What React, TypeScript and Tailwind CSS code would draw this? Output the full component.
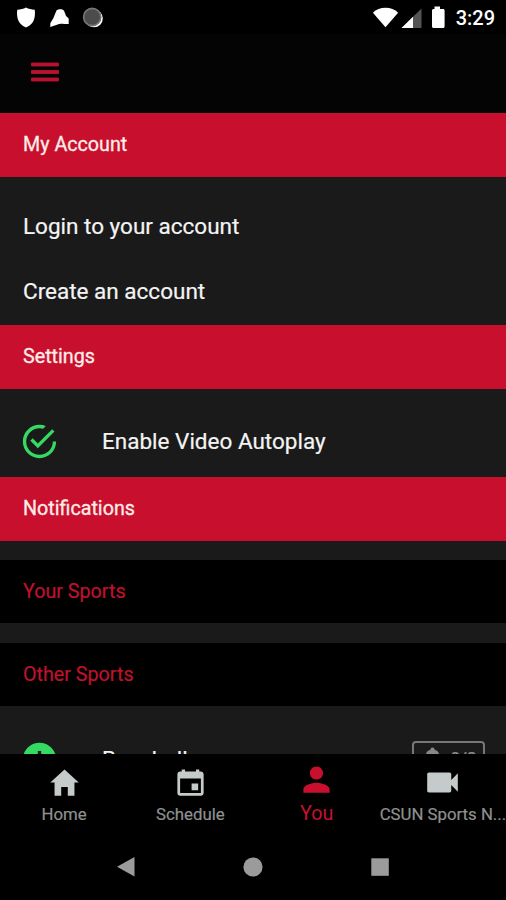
import type { ReactNode } from "react";
import type { IconType } from "react-icons";
import {
  IoMdAddCircle,
  IoMdCalendar,
  IoMdCheckmarkCircleOutline,
  IoMdHome,
  IoMdMenu,
  IoMdNotifications,
  IoMdPerson,
  IoMdVideocam,
} from "react-icons/io";

interface Tab {
  label: string;
  icon: IconType;
  active?: boolean;
}

const tabs: Tab[] = [
  { label: "Home", icon: IoMdHome },
  { label: "Schedule", icon: IoMdCalendar },
  { label: "You", icon: IoMdPerson, active: true },
  { label: "CSUN Sports N...", icon: IoMdVideocam },
];

function StatusBar() {
  return (
    <div className="flex h-[34px] shrink-0 items-center justify-between bg-black pl-4 pr-[11px]">
      <svg width="90" height="22" viewBox="0 0 90 22" fill="#fff">
        <path d="M10 1.600C7.500 3 4.500 3.700 1.300 3.800.8 7 .8 11.500 2.800 15.500 4.500 18.600 7.500 20.500 10 21.500c2.500-1 5.500-2.900 7.200-6 2-4 2-8.500 1.500-11.700C15.500 3.700 12.500 3 10 1.600z" />
        <path d="M40.500 4.500c1.400-1.600 6-1.800 7.300 0 1 1.500 1.500 3.700 2.200 5.500l2.700 2.500v5.600h-4.500c-3-.8-5.200-.3-7.200.6L34.200 21l.2-4 2.800-4.500z" />
        <circle cx="78" cy="12.500" r="8.800" />
        <circle cx="76.200" cy="11" r="8.600" fill="#4c4c4c" stroke="#777" strokeWidth="1.600" />
      </svg>
      <div className="flex items-center">
        <svg width="76" height="24" viewBox="0 0 76 24" fill="#fff" className="mr-[9px]">
          <path d="M14.500 22.300L1.900 7.700C5 4.500 9.500 2.700 14.500 2.700S24 4.500 27.100 7.700z" />
          <path d="M50.500 3.500V23H30.500z" fill="#555" />
          <path d="M42 11.800V23H30.500z" />
          <path d="M63.500 1.500h5.500V4h3c1 0 1.600.7 1.600 1.600v16c0 .9-.7 1.500-1.600 1.500H62.600c-.9 0-1.600-.6-1.600-1.500v-16C61 4.700 61.700 4 62.600 4h.9z" />
        </svg>
        <span className="relative top-px text-[20px] font-medium leading-6 text-white">3:29</span>
      </div>
    </div>
  );
}

function SectionHeader({ children }: { children: ReactNode }) {
  return (
    <h2 className="flex h-16 shrink-0 items-center bg-[#c8102e] pl-[23px] text-[19.7px] text-[#ffece8] [-webkit-text-stroke:0.3px_#ffece8]">
      {children}
    </h2>
  );
}

function SubHeader({ children }: { children: ReactNode }) {
  return (
    <h3 className="flex h-[63px] shrink-0 items-center bg-black pl-[23px] pt-px text-[19.7px] text-[#c0112e]">
      {children}
    </h3>
  );
}

function TabBar() {
  return (
    <nav className="grid h-20 shrink-0 grid-cols-4 bg-black pl-px">
      {tabs.map(({ label, icon: Icon, active }) => (
        <button
          key={label}
          className={
            active
              ? "flex min-w-0 flex-col items-center pt-2 text-[#c8102e]"
              : "flex min-w-0 flex-col items-center pt-[11px] text-[#8f9191]"
          }
        >
          <Icon className={active ? "size-[35px] shrink-0" : "size-[35px] shrink-0 text-[#c5caca]"} />
          <span
            className={
              active
                ? "text-[19.7px] leading-[33px]"
                : "whitespace-nowrap text-[16.8px] leading-[28px] [-webkit-text-stroke:0.2px_#8f9191]"
            }
          >
            {label}
          </span>
        </button>
      ))}
    </nav>
  );
}

function AndroidNav() {
  return (
    <div className="flex h-[66px] shrink-0 items-start justify-center gap-[107px] bg-black pt-[23px] text-[#9b9b9b]">
      <svg width="20" height="20" viewBox="0 0 20 20" fill="currentColor">
        <path d="M18.500 0v19.500L1 9.800z" />
      </svg>
      <svg width="20" height="20" viewBox="0 0 20 20" fill="currentColor">
        <circle cx="10" cy="10" r="9.600" />
      </svg>
      <svg width="20" height="20" viewBox="0 0 20 20" fill="currentColor">
        <path d="M1.300 1.300h17.500v17.500H1.300z" />
      </svg>
    </div>
  );
}

export default function App() {
  return (
    <div className="flex h-[900px] w-[506px] flex-col overflow-hidden bg-[#1a1a1a] font-['Roboto',sans-serif]">
      <StatusBar />
      <header className="flex h-[79px] shrink-0 items-center bg-[#040404] pb-1 pl-[27px]">
        <button aria-label="Menu">
          <IoMdMenu className="size-9 stroke-[12px] text-[#b9122f]" />
        </button>
      </header>

      <main className="flex min-h-0 flex-1 flex-col overflow-hidden text-[22.5px] text-[#f4f4f4] [-webkit-text-stroke:0.2px]">
        <SectionHeader>My Account</SectionHeader>
        <div className="flex h-[148px] shrink-0 flex-col pl-[23px] pt-[17px]">
          <a className="flex h-[65px] items-center">Login to your account</a>
          <a className="flex h-[65px] items-center">Create an account</a>
        </div>

        <SectionHeader>Settings</SectionHeader>
        <div className="flex h-[88px] shrink-0 items-center pl-[19px] pt-4">
          <IoMdCheckmarkCircleOutline className="mr-[42px] size-[41px] text-[#35da62]" />
          <span className="pt-0.5">Enable Video Autoplay</span>
        </div>

        <SectionHeader>Notifications</SectionHeader>
        <div className="mt-[19px] flex flex-col gap-5">
          <SubHeader>Your Sports</SubHeader>
          <SubHeader>Other Sports</SubHeader>
        </div>
        <div className="flex h-[88px] shrink-0 items-center pl-[19px] pr-[21px] pt-[19px]">
          <IoMdAddCircle className="mr-[42px] size-[41px] text-[#35da62]" />
          <span className="pt-px">Baseball</span>
          <div className="ml-auto flex h-[37px] w-[73px] items-start justify-center gap-[7px] rounded-[4px] border-[2.5px] border-[#777] pt-[3px] text-[17px] font-medium leading-6 text-[#888]">
            <IoMdNotifications className="size-[23px] stroke-[30px]" />
            0/8
          </div>
        </div>
      </main>

      <TabBar />
      <AndroidNav />
    </div>
  );
}
